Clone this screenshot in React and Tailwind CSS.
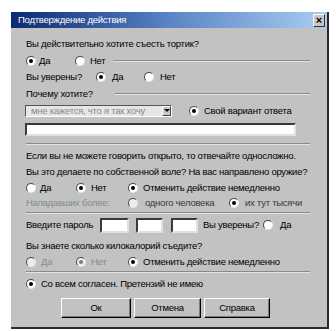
import React from "react";

const font = { fontFamily: '"Liberation Sans", Arial, sans-serif' };

function Radio({ checked, disabled }) {
  return (
    <span
      className={`inline-flex h-[10px] w-[10px] shrink-0 items-center justify-center rounded-full border border-b-[#e8e8e8] border-l-[#4a4a4a] border-r-[#e8e8e8] border-t-[#4a4a4a] ${
        disabled ? "bg-[#ececec]" : "bg-white"
      }`}
    >
      {checked && (
        <span className={`h-[4px] w-[4px] rounded-full ${disabled ? "bg-[#7a7a7a]" : "bg-black"}`} />
      )}
    </span>
  );
}

function Opt({ checked, disabled, label, w, gap, color = "text-black" }) {
  return (
    <div className={`flex shrink-0 items-center ${w}`}>
      <Radio checked={checked} disabled={disabled} />
      <span className={`${gap} whitespace-nowrap ${color}`}>{label}</span>
    </div>
  );
}

function Sep() {
  return (
    <div className="flex h-[2px] flex-col">
      <div className="h-px bg-[#8a8a8a]" />
      <div className="h-px bg-[#e4e4e4]" />
    </div>
  );
}

function Box({ w }) {
  return (
    <div
      className={`h-[15px] ${w} shrink-0 border-2 border-b-[#e0e0e0] border-l-[#3a3a3a] border-r-[#e0e0e0] border-t-[#3a3a3a] bg-white`}
    />
  );
}

function Btn({ label, w }) {
  return (
    <div
      className={`flex h-[20px] ${w} items-center justify-center border border-b-black border-l-white border-r-black border-t-white bg-[#c2c2c2] shadow-[inset_-1px_-1px_0_#7a7a7a]`}
    >
      {label}
    </div>
  );
}

export default function App() {
  return (
    <div
      className="h-[331px] w-[336px] whitespace-nowrap bg-white pl-[11px] pt-[12px] text-[9.5px] leading-none tracking-[-0.25px] text-black"
      style={font}
    >
      <div className="flex h-[317px] w-[318px] flex-col border-b-2 border-r-2 border-b-[#2a2a2a] border-r-[#2a2a2a] bg-[#c2c2c2]">
        {/* TITLE */}
        <div className="flex h-[16px] items-center justify-between bg-gradient-to-r from-[#0c2a72] via-[#5b84c4] to-[#a9cdf2] pl-[7px] pr-[2px] text-white">
          <span>Подтверждение действия</span>
          <div className="flex h-[13px] w-[12px] items-center justify-center border border-b-[#333] border-l-white border-r-[#333] border-t-white bg-[#c8c8c8] text-[11px] font-bold tracking-normal text-black">
            ×
          </div>
        </div>

        {/* CONTENT */}
        <div className="flex flex-col pl-[15px] pr-[17px] pt-[8px]">
          <div className="flex h-[16px] items-center">Вы действительно хотите съесть тортик?</div>

          <div className="flex h-[17px] items-center">
            <Opt checked label="Да" w="w-[49px]" gap="ml-[3px]" />
            <Opt label="Нет" w="w-[38px]" gap="ml-[5px]" />
            <div className="flex-1">
              <Sep />
            </div>
          </div>

          <div className="flex h-[16px] items-center">
            <span className="w-[70px]">Вы уверены?</span>
            <Opt checked label="Да" w="w-[48px]" gap="ml-[6px]" />
            <Opt label="Нет" gap="ml-[6px]" />
          </div>

          <div className="flex h-[17px] items-center">
            <span className="w-[89px]">Почему хотите?</span>
            <div className="flex-1">
              <Sep />
            </div>
          </div>

          <div className="flex h-[17px] items-center">
            <div className="-ml-px flex h-[12px] w-[147px] items-center border border-b-white border-l-[#555] border-r-white border-t-[#555] bg-[#e6e6e6]">
              <span className="flex-1 pl-[5px] text-[#8a8a8a]">мне кажется, что я так хочу</span>
              <div className="flex h-[10px] w-[9px] items-center justify-center border border-b-[#444] border-l-white border-r-[#444] border-t-white bg-[#c8c8c8]">
                <span className="h-0 w-0 border-l-[3px] border-r-[3px] border-t-[3px] border-l-transparent border-r-transparent border-t-black" />
              </div>
            </div>
            <div className="ml-[17px]">
              <Opt checked label="Свой вариант ответа" gap="ml-[5px]" />
            </div>
          </div>

          <div className="flex h-[20px] items-center">
            <div className="-ml-px h-[13px] w-[271px] border-2 border-b-[#e0e0e0] border-l-[#3a3a3a] border-r-[#e0e0e0] border-t-[#3a3a3a] bg-white" />
          </div>

          <div className="flex h-[9px] items-center">
            <div className="flex-1">
              <Sep />
            </div>
          </div>

          <div className="flex h-[15px] items-center">Если вы не можете говорить открыто, то отвечайте односложно.</div>
          <div className="flex h-[17px] items-center">Вы это делаете по собственной воле? На вас направлено оружие?</div>

          <div className="flex h-[16px] items-center">
            <Opt label="Да" w="w-[50px]" gap="ml-[4px]" />
            <Opt checked label="Нет" w="w-[52px]" gap="ml-[5px]" />
            <Opt checked label="Отменить действие немедленно" gap="ml-[5px]" />
          </div>

          <div className="flex h-[14px] items-center">
            <span className="w-[102px] text-[#7f8c94]">Нападавших более:</span>
            <Opt label="одного человека" disabled w="w-[101px]" gap="ml-[7px]" color="text-[#3a3a3a]" />
            <Opt checked label="их тут тысячи" gap="ml-[6px]" color="text-[#3a3a3a]" />
          </div>

          <div className="flex h-[6px] items-center">
            <div className="flex-1">
              <Sep />
            </div>
          </div>

          <div className="flex h-[18px] items-center">
            <span className="w-[74px]">Введите пароль</span>
            <Box w="w-[29px]" />
            <div className="ml-[7px]">
              <Box w="w-[27px]" />
            </div>
            <div className="ml-[8px]">
              <Box w="w-[27px]" />
            </div>
            <span className="ml-[5px] w-[60px]">Вы уверены?</span>
            <Opt label="Да" gap="ml-[7px]" />
          </div>

          <div className="flex h-[20px] items-center pt-[4px]">Вы знаете сколько килокалорий съедите?</div>

          <div className="flex h-[16px] items-center">
            <Opt label="Да" disabled w="w-[50px]" gap="ml-[5px]" color="text-[#8a8a8a]" />
            <Opt checked disabled label="Нет" w="w-[52px]" gap="ml-[5px]" color="text-[#8a8a8a]" />
            <Opt checked label="Отменить действие немедленно" gap="ml-[5px]" />
          </div>

          <div className="flex h-[4px] items-center">
            <div className="flex-1">
              <Sep />
            </div>
          </div>

          <div className="flex h-[20px] items-center">
            <Opt checked label="Со всем согласен. Претензий не имею" gap="ml-[5px]" />
          </div>

          <div className="mt-[4px] flex items-center pl-[35px]">
            <Btn label="Ок" w="w-[70px]" />
            <div className="ml-[3px]">
              <Btn label="Отмена" w="w-[67px]" />
            </div>
            <div className="ml-[3px]">
              <Btn label="Справка" w="w-[66px]" />
            </div>
          </div>
        </div>
      </div>
    </div>
  );
}
